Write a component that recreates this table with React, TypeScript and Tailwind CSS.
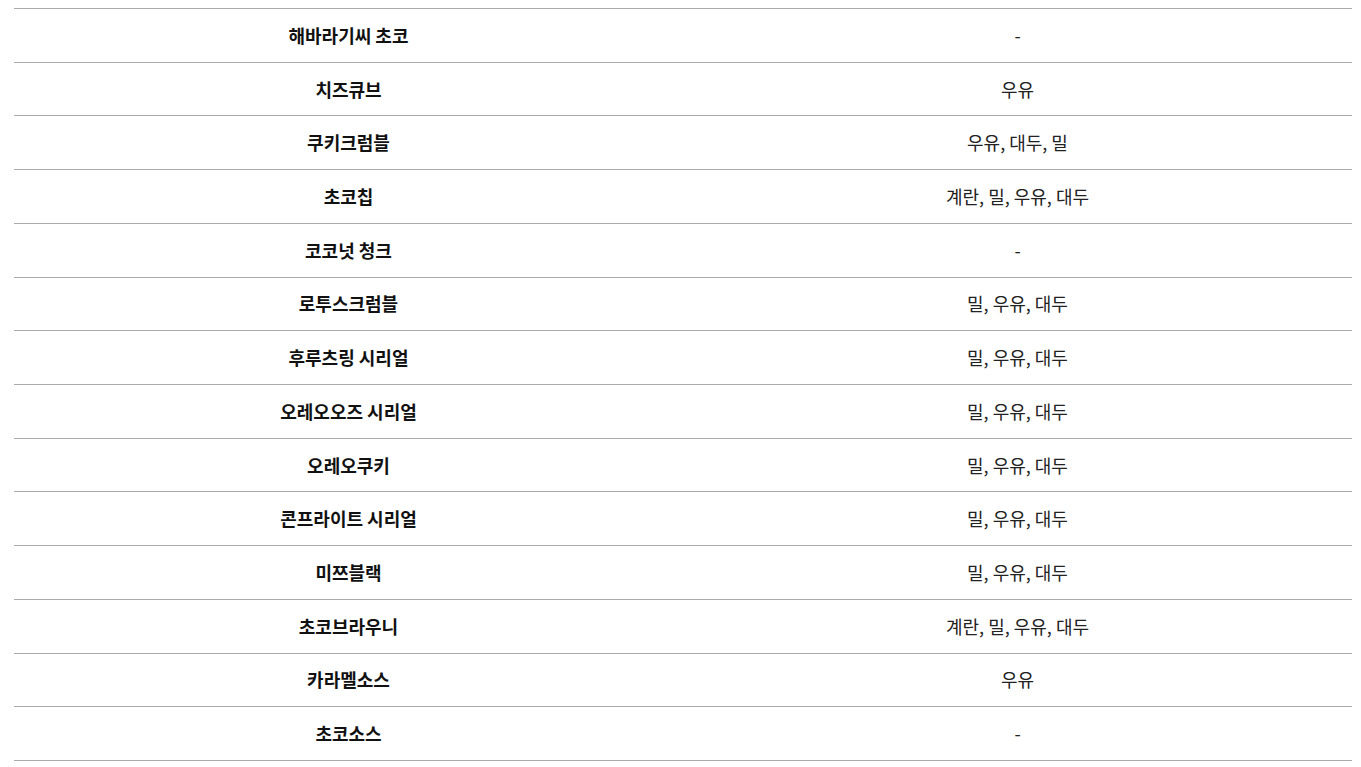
const rows: [string, string][] = [
  ['해바라기씨 초코', '-'],
  ['치즈큐브', '우유'],
  ['쿠키크럼블', '우유, 대두, 밀'],
  ['초코칩', '계란, 밀, 우유, 대두'],
  ['코코넛 청크', '-'],
  ['로투스크럼블', '밀, 우유, 대두'],
  ['후루츠링 시리얼', '밀, 우유, 대두'],
  ['오레오오즈 시리얼', '밀, 우유, 대두'],
  ['오레오쿠키', '밀, 우유, 대두'],
  ['콘프라이트 시리얼', '밀, 우유, 대두'],
  ['미쯔블랙', '밀, 우유, 대두'],
  ['초코브라우니', '계란, 밀, 우유, 대두'],
  ['카라멜소스', '우유'],
  ['초코소스', '-'],
];

export default function App() {
  return (
    <div
      className="bg-white pt-2 min-h-[767px]"
      style={{ fontFamily: '"Noto Sans CJK KR", "Noto Sans", sans-serif' }}
    >
      <div className="ml-[14px] w-[1338px] border-t border-[#aaaaaa]">
        {rows.map(([name, allergy]) => (
          <div key={name} className="flex h-[53.72px] border-b border-[#aaaaaa] text-[18px]">
            <div className="flex w-1/2 items-center justify-center font-bold text-[#111]">{name}</div>
            <div className="flex w-1/2 items-center justify-center text-[#222]">{allergy}</div>
          </div>
        ))}
      </div>
    </div>
  );
}
